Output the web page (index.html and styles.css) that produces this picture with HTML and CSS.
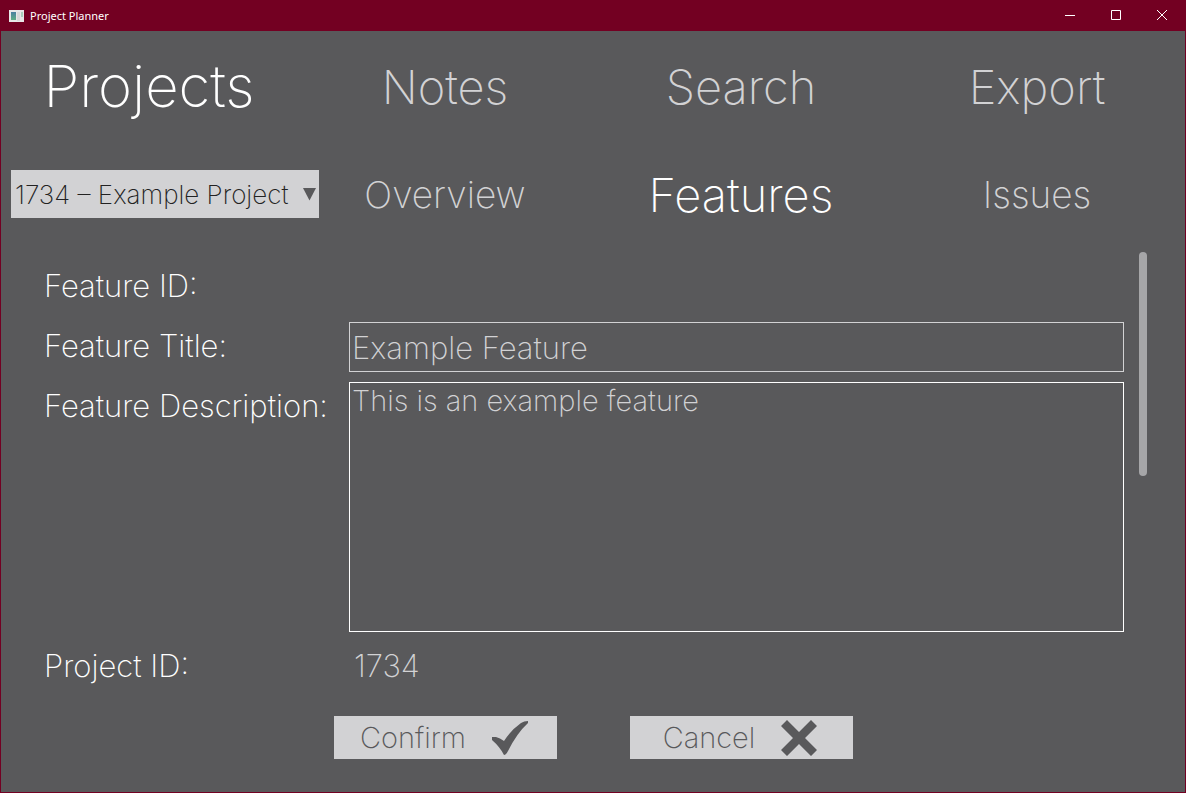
FILE: index.html
```html
<!DOCTYPE html>
<html lang="en">
<head>
<meta charset="utf-8">
<title>Project Planner</title>
<link rel="stylesheet" href="styles.css">
</head>
<body>
<div class="window">
  <header class="titlebar">
    <svg class="app-icon" width="15" height="12" viewBox="0 0 15 12" aria-hidden="true">
      <defs><linearGradient id="g" x1="0" y1="0" x2="0" y2="1"><stop offset="0" stop-color="#4a7fa0"/><stop offset="1" stop-color="#5fae84"/></linearGradient></defs>
      <rect width="15" height="12" fill="#e8e8e8"/>
      <rect x="2" y="2" width="5" height="8" fill="url(#g)"/>
      <rect x="8" y="2" width="3" height="9" fill="#d8d8d8"/>
      <rect x="12" y="2" width="2" height="5" fill="#a9d0bd"/>
    </svg>
    <span class="caption">Project Planner</span>
    <div class="window-buttons">
      <button type="button" aria-label="Minimize"><svg width="10" height="10" viewBox="0 0 10 10"><path d="M0 5.500H10"/></svg></button>
      <button type="button" aria-label="Maximize"><svg width="10" height="10" viewBox="0 0 10 10"><path d="M.5 .5H9.500V9.500H.5Z"/></svg></button>
      <button type="button" aria-label="Close"><svg width="10" height="10" viewBox="0 0 10 10"><path d="M0 0L10 10M10 0L0 10"/></svg></button>
    </div>
  </header>
  <nav class="columns main-nav">
    <a href="#projects" class="active">Projects</a>
    <a href="#notes">Notes</a>
    <a href="#search">Search</a>
    <a href="#export">Export</a>
  </nav>
  <nav class="columns sub-nav">
    <div class="picker">
      <select aria-label="Project"><option>1734 – Example Project</option></select>
      <svg class="arrow" width="13" height="13" viewBox="0 0 13 13" aria-hidden="true"><path d="M0 0H13L6.500 12.500Z"/></svg>
    </div>
    <a href="#overview">Overview</a>
    <a href="#features" class="active">Features</a>
    <a href="#issues">Issues</a>
  </nav>
  <main class="content">
    <form class="form">
      <span class="label">Feature ID:</span>
      <output></output>
      <label class="label" for="title">Feature Title:</label>
      <input id="title" type="text" value="Example Feature">
      <label class="label" for="description">Feature Description:</label>
      <textarea id="description" spellcheck="false">This is an example feature</textarea>
      <span class="label">Project ID:</span>
      <output class="value">1734</output>
    </form>
    <div class="scrollbar"></div>
  </main>
  <footer class="columns actions">
    <button type="button" class="action confirm">Confirm
      <svg width="36" height="36" viewBox="0 0 36 36" aria-hidden="true"><path d="M0 17L4 17Q8 18 12 21Q19 10 29 3Q32 1 36 1V3Q25 13 16 31Q14 35 12 35Q8 27 0 20Z"/></svg>
    </button>
    <button type="button" class="action cancel">Cancel
      <svg width="36" height="36" viewBox="0 0 36 36" aria-hidden="true"><path d="M6 0L18 12L30 0L36 6L24 18L36 30L30 36L18 24L6 36L0 30L12 18L0 6Z"/></svg>
    </button>
  </footer>
</div>
</body>
</html>
```
FILE: styles.css
```css
* { box-sizing: border-box; }
body { margin: 0; background: #59595b; }
.window {
  min-height: 100vh;
  border: 1px solid #730022;
  border-top: 0;
  background: #59595b;
  color: #d2d2d4;
  font-family: Inter, sans-serif;
  font-weight: 200;
}
.titlebar {
  display: flex;
  align-items: center;
  height: 31px;
  padding-left: 8px;
  background: #730022;
  color: #fff;
}
.caption { margin-left: 6px; font: 400 11px/16px "Noto Sans", sans-serif; }
.window-buttons { display: flex; align-self: flex-start; margin-left: auto; }
.window-buttons button {
  display: grid;
  place-items: center;
  width: 46px;
  height: 30px;
  padding: 0;
  border: 0;
  background: none;
}
.window-buttons path { fill: none; stroke: #fff; stroke-width: 1; }
.columns { display: grid; grid-template-columns: repeat(4, minmax(0, 1fr)); align-items: center; }
.columns a { color: #d2d2d4; text-align: center; text-decoration: none; }
.columns a.active { color: #fff; }
.main-nav { height: 110px; font-size: 47px; }
.main-nav .active { font-size: 58px; }
.sub-nav { height: 106px; font-size: 37px; }
.sub-nav .active { font-size: 47px; }
.picker { position: relative; width: 308px; margin-left: 10px; }
.picker select {
  appearance: none;
  display: block;
  width: 100%;
  height: 48px;
  padding: 0 4px;
  border: 0;
  border-radius: 0;
  background: #d2d2d4;
  color: #222;
  font: inherit;
  font-size: 26px;
}
.arrow { position: absolute; right: 3px; top: 18px; fill: #59595b; pointer-events: none; }
.content { display: flex; padding: 5px 38px 0 43px; }
.form {
  flex: 1;
  display: grid;
  grid-template-columns: 295px 1fr;
  grid-template-rows: 50px 50px 250px 50px;
  gap: 10px;
  padding-top: 10px;
  font-size: 31px;
}
.label { color: #fff; line-height: 48px; white-space: nowrap; }
.value { padding-left: 5px; line-height: 48px; }
.form input, .form textarea {
  width: 100%;
  height: 100%;
  padding: 0 2px;
  border: 1px solid #d2d2d4;
  border-radius: 0;
  outline: 0;
  background: none;
  color: #d2d2d4;
  font: inherit;
  resize: none;
}
.form textarea { border-color: #fff; font-size: 29px; line-height: 36px; }
.scrollbar { width: 8px; height: 224px; margin-left: 15px; border-radius: 4px; background: #a6a6a8; }
.actions { margin-top: 24px; }
.action {
  display: flex;
  align-items: center;
  justify-content: center;
  gap: 26px;
  width: 223px;
  height: 43px;
  padding: 0 2px 0 0;
  border: 0;
  background: #d2d2d4;
  color: #59595b;
  font: inherit;
  font-size: 29px;
  justify-self: center;
}
.action svg { fill: #59595b; }
.confirm { grid-column: 2; }
.cancel { grid-column: 3; }
```
